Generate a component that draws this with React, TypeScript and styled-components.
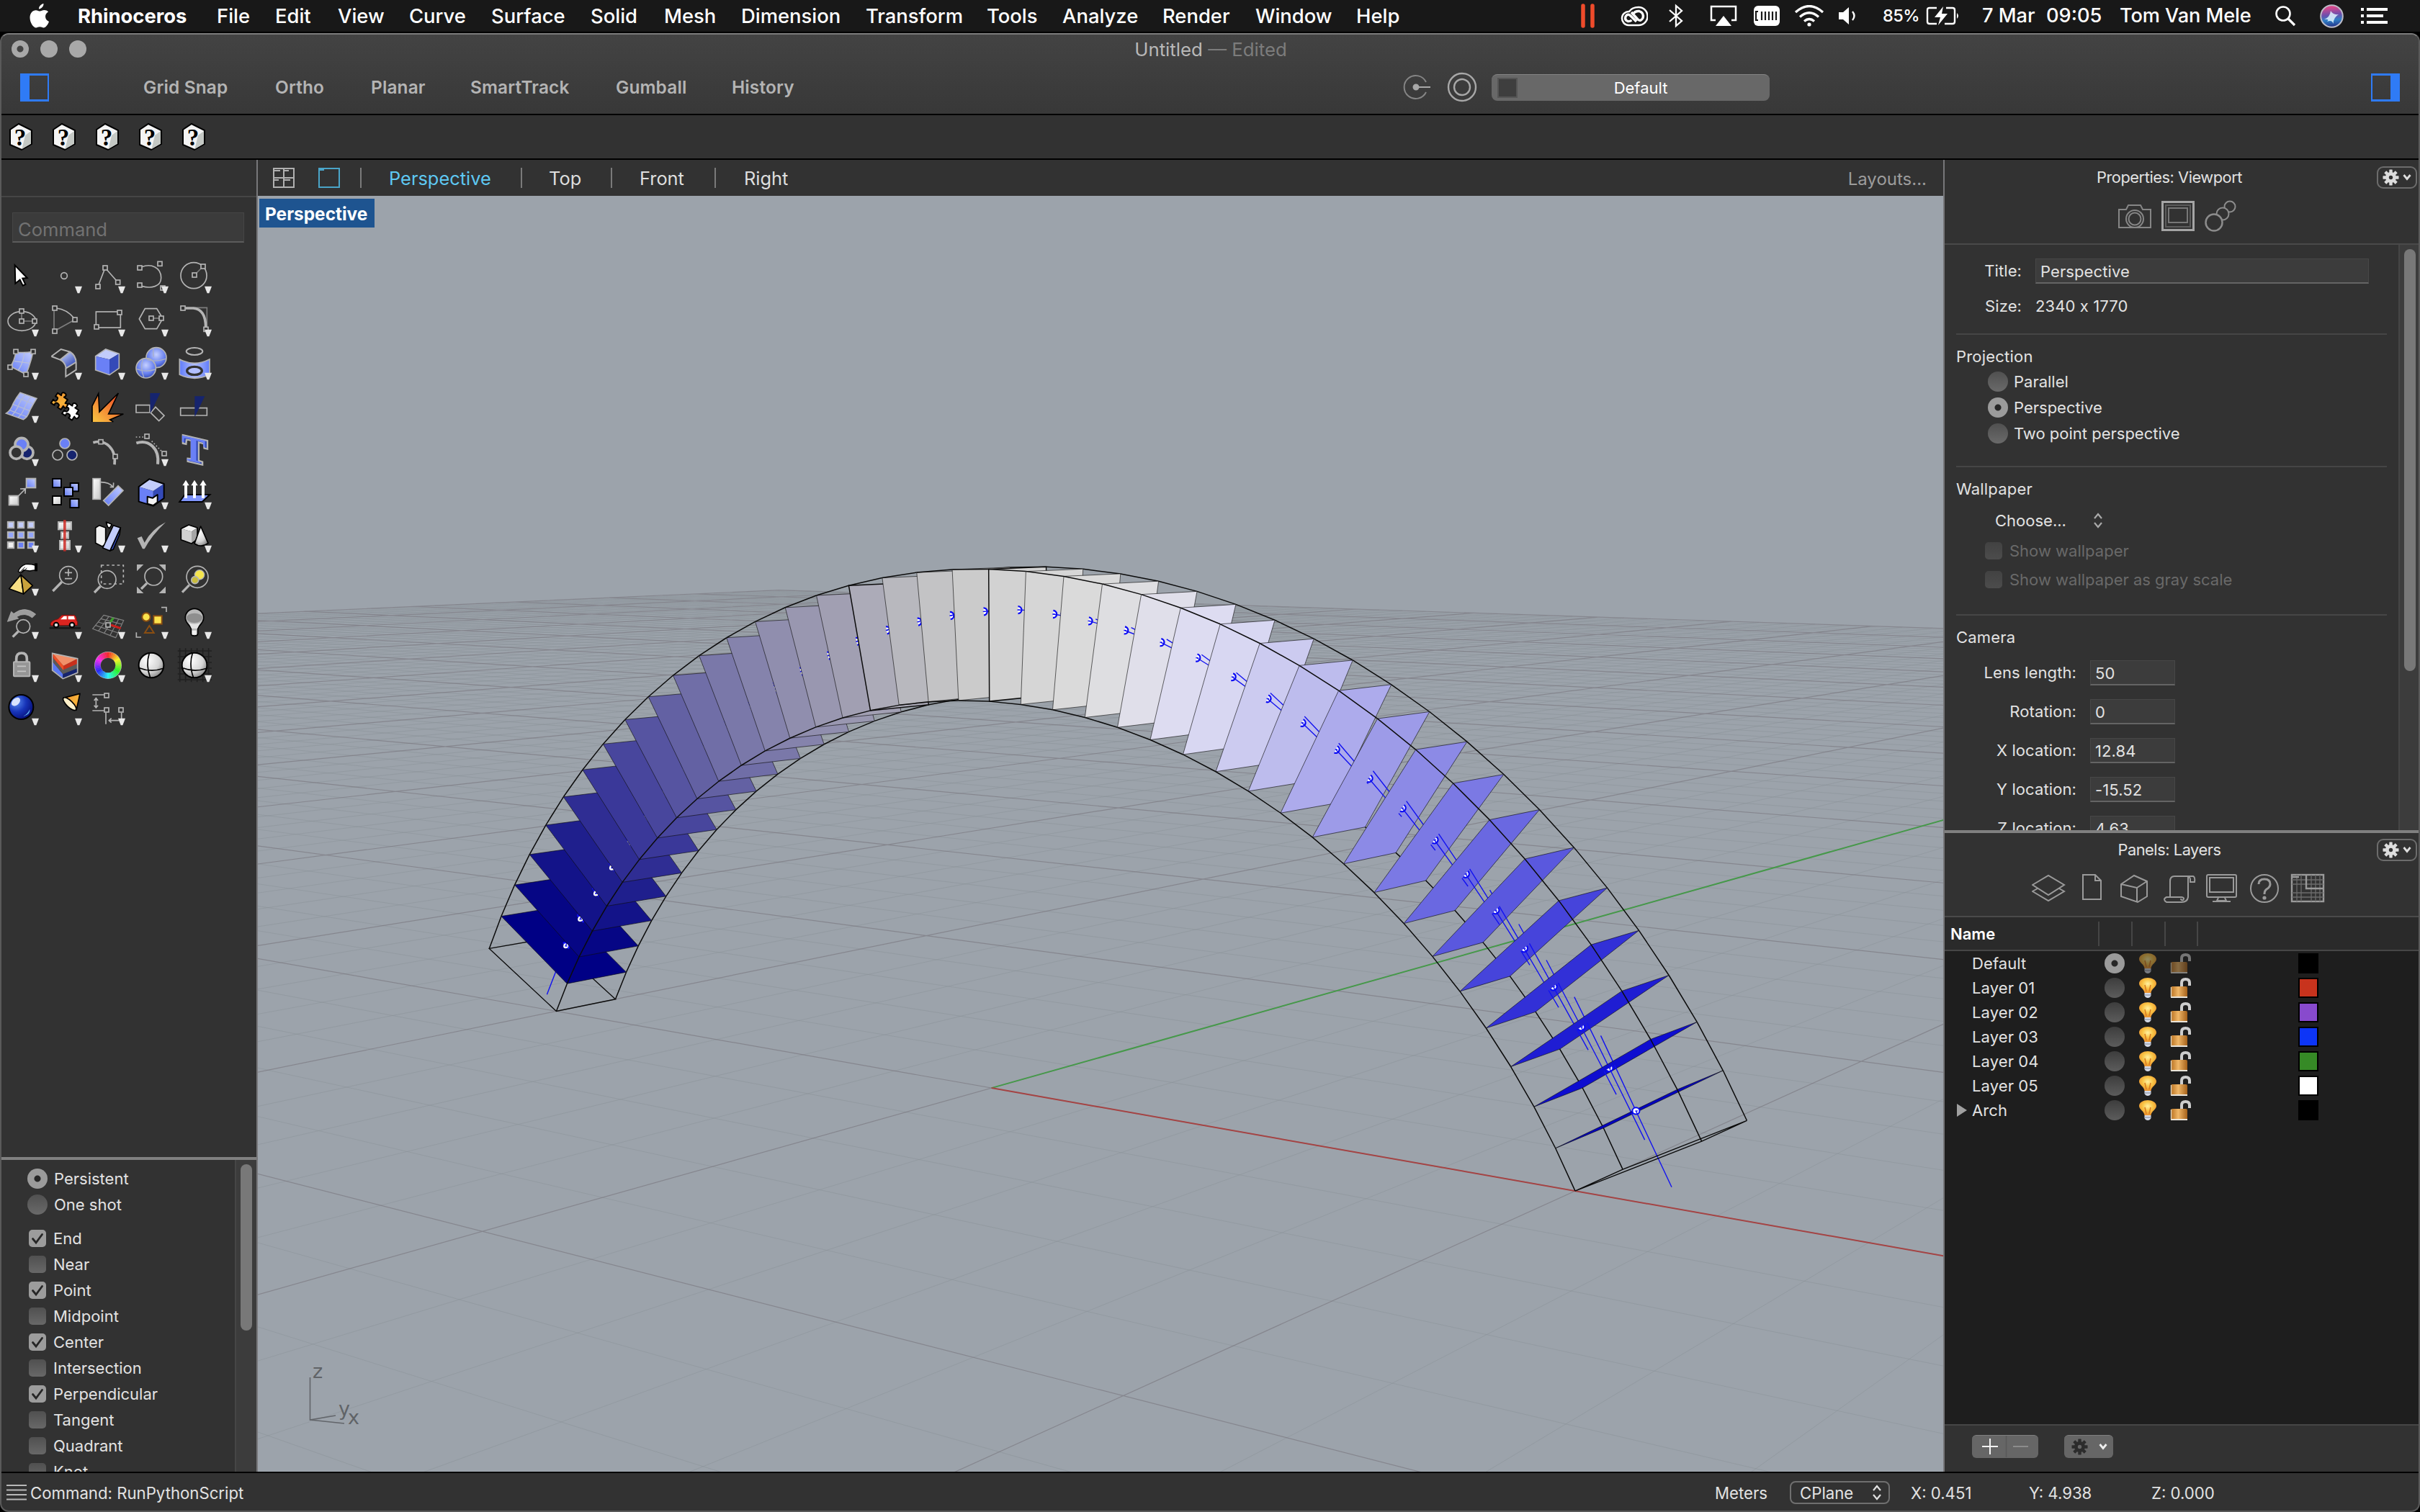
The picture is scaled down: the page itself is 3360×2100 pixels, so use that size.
import React from "react";
import styled, { createGlobalStyle } from "styled-components";

/* ---------- base ---------- */

const Global = createGlobalStyle`
  html, body { margin: 0; padding: 0; background: #000; }
  * { box-sizing: border-box; }
`;

const Desktop = styled.div`
  width: 3360px;
  height: 2100px;
  overflow: hidden;
  display: flex;
  flex-direction: column;
  background: #000;
  font-family: Inter, "Liberation Sans", sans-serif;
  font-size: 22px;
  color: #e2e2e2;
  white-space: nowrap;
`;

/* ---------- system menu bar ---------- */

const MenuBar = styled.header`
  height: 44px;
  flex: none;
  display: flex;
  justify-content: space-between;
  align-items: center;
  background: #181818;
  color: #fff;
  font-size: 27.4px;
  line-height: 44px;
`;

const MenuLeft = styled.nav`
  display: flex;
  align-items: center;
  padding-left: 40px;
`;

const AppleSlot = styled.div`
  width: 68px;
  display: flex;
`;

const MenuEntry = styled.span<{ $w: number; $bold?: boolean; $ls?: number }>`
  width: ${(p) => p.$w}px;
  font-weight: ${(p) => (p.$bold ? 700 : 500)};
  letter-spacing: ${(p) => p.$ls ?? 0}px;
`;

const MenuRight = styled.div`
  display: flex;
  align-items: center;
  width: 1165px;
`;

const StatusItem = styled.div<{ $w: number; $size?: number; $ls?: number }>`
  width: ${(p) => p.$w}px;
  flex: none;
  display: flex;
  align-items: center;
  font-size: ${(p) => p.$size ?? 27.2}px;
  letter-spacing: ${(p) => p.$ls ?? 0}px;
  font-weight: 500;
`;

/* ---------- window ---------- */

const Window = styled.section`
  margin-top: 2px;
  height: 2054px;
  display: flex;
  flex-direction: column;
  background: #323232;
  border-radius: 12px;
  border: 2px solid #5a5a5a;
  border-top-color: #7b7b7b;
  overflow: hidden;
`;

const TitleBar = styled.div`
  height: 112px;
  flex: none;
  background: linear-gradient(#434343, #383838);
  border-bottom: 2px solid #000;
  display: flex;
  flex-direction: column;
`;

const TitleRow = styled.div`
  height: 40px;
  display: grid;
  grid-template-columns: 300px 1fr 300px;
  align-items: center;
`;

const Lights = styled.div`
  display: flex;
  gap: 16px;
  padding-left: 14px;
`;

const Light = styled.i<{ $dot?: boolean }>`
  width: 24px;
  height: 24px;
  border-radius: 50%;
  background: ${(p) =>
    p.$dot ? "radial-gradient(circle, #444 0 4px, #a8a8a8 5px)" : "#a8a8a8"};
`;

const WindowTitle = styled.h1`
  margin: 0;
  padding-left: 2px;
  text-align: center;
  font-size: 25.8px;
  font-weight: 400;
  color: #b8b8b8;
  em {
    font-style: normal;
    color: #7c7c7c;
  }
`;

const ModeRow = styled.div`
  height: 66px;
  display: flex;
  align-items: center;
  padding: 0 26px;
`;

const SideToggle = styled.i<{ $right?: boolean }>`
  width: 40px;
  height: 39px;
  flex: none;
  border: 2px solid #2f7bf6;
  border-top-width: 3px;
  border-bottom-width: 3px;
  ${(p) => (p.$right ? "border-right-width: 13px;" : "border-left-width: 13px;")}
`;

const Mode = styled.span<{ $w: number }>`
  width: ${(p) => p.$w}px;
  font-size: 24.4px;
  font-weight: 600;
  letter-spacing: 0.15px;
  color: #b4b4b4;
`;

const Modes = styled.div`
  display: flex;
  margin-left: 131px;
  width: 1747px;
  flex: none;
`;

const RoundIcons = styled.div`
  display: flex;
  gap: 21px;
  width: 125px;
  flex: none;
  align-items: center;
  svg {
    flex: none;
  }
`;

const DisplayMode = styled.div`
  width: 386px;
  height: 37px;
  border-radius: 8px;
  background: #686868;
  border-top: 1px solid #858585;
  display: flex;
  align-items: center;
  padding-left: 8px;
  margin-right: auto;
  color: #fff;
  font-size: 22px;
  i {
    width: 28px;
    height: 28px;
    background: #3e3e3e;
    border: 2px solid #555;
  }
  span {
    flex: 1;
    text-align: center;
    padding-right: 8px;
  }
`;

const ScriptBar = styled.div`
  height: 62px;
  flex: none;
  border-bottom: 2px solid #000;
  display: flex;
  align-items: center;
  gap: 28px;
  padding-left: 11px;
  svg {
    display: block;
    overflow: visible;
  }
`;

const Work = styled.main`
  height: 1822px;
  flex: none;
  display: flex;
`;

/* ---------- left column ---------- */

const LeftColumn = styled.aside`
  width: 356px;
  flex: none;
  border-right: 2px solid #77777a;
  display: flex;
  flex-direction: column;
`;

const LeftHeader = styled.div`
  height: 52px;
  flex: none;
  border-bottom: 2px solid #464646;
`;

const CommandField = styled.div`
  margin: 21px 0 16px 15px;
  width: 322px;
  height: 42px;
  background: #3b3b3b;
  border: 1px solid #454545;
  border-bottom: 2px solid #5c5c5c;
  color: #727272;
  font-size: 25.6px;
  line-height: 45px;
  padding-left: 7px;
`;

const ToolGrid = styled.div`
  margin-left: -2px;
  display: grid;
  grid-template-columns: repeat(5, 60px);
  grid-auto-rows: 60px;
  height: 1254px;
  align-content: start;
  svg {
    display: block;
    overflow: visible;
  }
`;

const SnapPanel = styled.div`
  border-top: 4px solid #808080;
  height: 437px;
  display: flex;
  overflow: hidden;
`;

const SnapList = styled.div`
  flex: 1;
  padding: 8px 0 0 36px;
`;

const SnapGroup = styled.div`
  margin-top: 11px;
`;

const Track = styled.div<{ $w: number; $top: number }>`
  width: ${(p) => p.$w}px;
  flex: none;
  background: #3c3c3c;
  border-left: 2px solid #464646;
  padding: ${(p) => p.$top}px 0 0 6px;
`;

const Thumb = styled.i<{ $h: number }>`
  display: block;
  width: 16px;
  height: ${(p) => p.$h}px;
  border-radius: 8px;
  background: #787878;
`;

const Line = styled.label<{ $h?: number; $mt?: number; $dim?: boolean; $gap?: number; $pl?: number }>`
  display: flex;
  align-items: center;
  height: ${(p) => p.$h ?? 36}px;
  margin-top: ${(p) => p.$mt ?? 0}px;
  padding-left: ${(p) => p.$pl ?? 0}px;
  gap: ${(p) => p.$gap ?? 9}px;
  color: ${(p) => (p.$dim ? "#696969" : "#e2e2e2")};
`;

const RadioDot = styled.i<{ $on?: boolean; $dark?: boolean }>`
  width: 28px;
  height: 28px;
  flex: none;
  border-radius: 50%;
  background: ${(p) =>
    p.$on
      ? "radial-gradient(circle, #262626 0 4px, #9b9b9b 5px)"
      : p.$dark
      ? "linear-gradient(#3d3d3d, #5c5c5c)"
      : "linear-gradient(#505050, #6a6a6a)"};
`;

const CheckBox = styled.i<{ $on?: boolean; $dim?: boolean }>`
  width: 24px;
  height: 24px;
  flex: none;
  border-radius: 5px;
  background: ${(p) =>
    p.$on ? "#9c9c9c" : p.$dim ? "linear-gradient(#424242, #4c4c4c)" : "linear-gradient(#505050, #686868)"};
  svg {
    display: block;
  }
`;

/* ---------- viewport column ---------- */

const ViewColumn = styled.section`
  width: 2340px;
  flex: none;
  display: flex;
  flex-direction: column;
`;

const ViewTabs = styled.div`
  height: 50px;
  flex: none;
  display: flex;
  align-items: center;
  padding-left: 21px;
  font-size: 25.4px;
`;

const ViewTab = styled.span<{ $w: number; $active?: boolean }>`
  width: ${(p) => p.$w}px;
  color: ${(p) => (p.$active ? "#5ec8f2" : "#dedede")};
  line-height: 32px;
  height: 30px;
`;

const Sep = styled.i<{ $mr: number }>`
  width: 2px;
  height: 28px;
  margin-right: ${(p) => p.$mr}px;
  background: #7a7a7a;
`;

const Layouts = styled.span`
  margin-left: auto;
  margin-right: 23px;
  padding-top: 3px;
  color: #9c9c9c;
  font-size: 24px;
`;

const LayoutIcon = styled.svg`
  margin: 0 28px 0 33px;
`;

const ViewCanvas = styled.div`
  position: relative;
  width: 2340px;
  height: 1772px;
  background: #9ca3ab;
  svg {
    display: block;
  }
`;

const ViewName = styled.div`
  position: absolute;
  left: 2px;
  top: 4px;
  width: 160px;
  height: 40px;
  background: #1e5490;
  color: #fff;
  font-weight: 700;
  font-size: 24.4px;
  line-height: 42px;
  padding-left: 8px;
`;

/* ---------- right column ---------- */

const RightColumn = styled.aside`
  width: 660px;
  flex: none;
  border-left: 2px solid #77777a;
  display: flex;
  flex-direction: column;
`;

const PanelHead = styled.div<{ $h: number }>`
  height: ${(p) => p.$h}px;
  flex: none;
  border-bottom: 2px solid #4a4a4a;
`;

const PanelTitle = styled.div<{ $h: number }>`
  display: grid;
  grid-template-columns: 60px 1fr 60px;
  align-items: center;
  height: ${(p) => p.$h}px;
  text-align: center;
  font-size: 21.8px;
  letter-spacing: -0.45px;
  padding-right: 2px;
  padding-left: 22px;
  span {
    padding-right: 56px;
    padding-left: 2px;
  }
`;

const GearButton = styled.div`
  width: 56px;
  height: 31px;
  justify-self: end;
  border: 2px solid #6c6c6c;
  border-radius: 9px;
  display: flex;
  align-items: center;
  justify-content: center;
  gap: 4px;
`;

const IconStrip = styled.div<{ $pl: number; $h: number; $gap: number }>`
  display: flex;
  align-items: center;
  height: ${(p) => p.$h}px;
  padding-left: ${(p) => p.$pl}px;
  gap: ${(p) => p.$gap}px;
`;

const Properties = styled.div`
  height: 813px;
  flex: none;
  display: flex;
  overflow: hidden;
`;

const PropBody = styled.div`
  width: 630px;
  flex: none;
  padding-top: 18px;
`;

const PropRow = styled.div<{ $label: number; $mb?: number }>`
  display: grid;
  grid-template-columns: ${(p) => p.$label}px auto;
  column-gap: 19px;
  justify-content: start;
  align-items: center;
  height: 36px;
  margin-bottom: ${(p) => p.$mb ?? 18}px;
  letter-spacing: 0.1px;
  > label {
    text-align: right;
  }
`;

const Field = styled.div<{ $w: number }>`
  width: ${(p) => p.$w}px;
  height: 35px;
  background: #3c3c3c;
  border: 1px solid #474747;
  border-bottom: 2px solid #646464;
  padding-left: 6px;
  line-height: 35px;
`;

const Rule = styled.hr<{ $mt: number }>`
  border: 0;
  height: 2px;
  background: #464646;
  width: 598px;
  margin: ${(p) => p.$mt}px 0 0 16px;
`;

const SectionName = styled.h2<{ $mt: number; $mb: number }>`
  margin: ${(p) => p.$mt}px 0 ${(p) => p.$mb}px 16px;
  height: 28px;
  line-height: 28px;
  font-size: 22px;
  font-weight: 400;
  letter-spacing: 0.2px;
`;

const Choose = styled.div`
  display: flex;
  align-items: center;
  height: 30px;
  padding-left: 70px;
  gap: 36px;
`;

const LayersPanel = styled.div`
  border-top: 4px solid #808080;
  flex: 1;
  display: flex;
  flex-direction: column;
`;

const LayerGridHead = styled.div`
  height: 47px;
  flex: none;
  background: #2a2a2a;
  border-bottom: 2px solid #464646;
  display: grid;
  grid-template-columns: 205px 46px 46px 45px 46px;
  padding-left: 8px;
  align-items: center;
  color: #fff;
  font-weight: 600;
  i {
    height: 34px;
    width: 2px;
    background: #464646;
  }
`;

const LayerList = styled.div`
  height: 659px;
  flex: none;
  background: #1e1e1e;
  border-bottom: 2px solid #464646;
`;

const LayerRow = styled.div`
  display: grid;
  grid-template-columns: 21px 184px 47px 44px 178px 28px;
  align-items: center;
  height: 34px;
  padding-left: 17px;
  letter-spacing: 0.1px;
  svg {
    display: block;
  }
`;

const Swatch = styled.i<{ $c: string }>`
  width: 28px;
  height: 28px;
  border: 2px solid #000;
  background: ${(p) => p.$c};
`;

const LayerButtons = styled.div`
  display: flex;
  gap: 36px;
  padding: 13px 0 0 38px;
`;

const ButtonPill = styled.div<{ $w: number }>`
  width: ${(p) => p.$w}px;
  height: 32px;
  border-radius: 6px;
  background: #666;
  border-top: 1px solid #7f7f7f;
  svg {
    display: block;
  }
`;

/* ---------- status bar ---------- */

const StatusBar = styled.footer`
  flex: 1;
  border-top: 2px solid #000;
  display: flex;
  align-items: center;
  padding-left: 7px;
  padding-top: 2px;
  font-size: 22.2px;
`;

const StatusText = styled.span<{ $w: number; $ml?: number }>`
  width: ${(p) => p.$w}px;
  margin-left: ${(p) => p.$ml ?? 0}px;
`;

const CPlane = styled.div`
  width: 139px;
  height: 32px;
  border: 2px solid #6f6f6f;
  border-radius: 8px;
  display: flex;
  align-items: center;
  justify-content: space-between;
  padding: 0 8px 0 12px;
  margin-right: 29px;
`;

/* ---------- 3D scene ---------- */

type V3 = [number, number, number];
type P2 = [number, number];

const YAW = (37.2 * Math.PI) / 180;
const PITCH = (7.47 * Math.PI) / 180;
const FOCAL = 3687;
const EYE: V3 = [12.84, -15.52, 4.63];

function toCamera(p: V3): V3 {
  const dx = p[0] - EYE[0];
  const dy = p[1] - EYE[1];
  const dz = p[2] - EYE[2];
  const fwd = -dx * Math.sin(YAW) + dy * Math.cos(YAW);
  const right = dx * Math.cos(YAW) + dy * Math.sin(YAW);
  return [
    right,
    dz * Math.cos(PITCH) + fwd * Math.sin(PITCH),
    fwd * Math.cos(PITCH) - dz * Math.sin(PITCH),
  ];
}

const flat = (c: V3): P2 => [1170 + (FOCAL * c[0]) / c[2], 885 - (FOCAL * c[1]) / c[2]];
const project = (p: V3): P2 => flat(toCamera(p));

function segment(a: V3, b: V3): string {
  let ca = toCamera(a);
  let cb = toCamera(b);
  const near = 2;
  if (ca[2] < near && cb[2] < near) return "";
  if (ca[2] < near || cb[2] < near) {
    const t = (near - ca[2]) / (cb[2] - ca[2]);
    const m: V3 = [ca[0] + (cb[0] - ca[0]) * t, ca[1] + (cb[1] - ca[1]) * t, near];
    if (ca[2] < near) ca = m;
    else cb = m;
  }
  const p = flat(ca);
  const q = flat(cb);
  return `M${p[0].toFixed(1)} ${p[1].toFixed(1)}L${q[0].toFixed(1)} ${q[1].toFixed(1)}`;
}

function gridPaths() {
  let minor = "";
  let major = "";
  for (let k = -70; k <= 70; k++) {
    const d = segment([k, -70, 0], [k, 70, 0]) + segment([-70, k, 0], [70, k, 0]);
    if (k % 5 === 0) major += d;
    else minor += d;
  }
  return { minor, major };
}

const RADIUS = 17 / 3;
const DROP = RADIUS - 3;
const HALF = Math.asin(5 / RADIUS);
const COUNT = 40;
const DEPTH = 0.7;

const angleAt = (i: number) => -HALF + (2 * HALF * i) / COUNT;
const ringPoint = (i: number, r: number, y: number): V3 => [
  r * Math.sin(angleAt(i)),
  y,
  r * Math.cos(angleAt(i)) - DROP,
];
const corners = (i: number): P2[] =>
  [
    ringPoint(i, RADIUS, 0),
    ringPoint(i, RADIUS + 1, 0),
    ringPoint(i, RADIUS + 1, DEPTH),
    ringPoint(i, RADIUS, DEPTH),
  ].map(project);

const THRUST: P2[] = [
  [0, 6.347],
  [4, 6.293],
  [5, 6.273],
  [10, 6.131],
  [15, 6.068],
  [17, 6.087],
  [19, 6.14],
];
function thrustRadius(i: number) {
  const a = Math.abs(i - 20);
  for (let k = 1; k < THRUST.length; k++) {
    if (a <= THRUST[k][0]) {
      const [x0, y0] = THRUST[k - 1];
      const [x1, y1] = THRUST[k];
      return y0 + ((y1 - y0) * (a - x0)) / (x1 - x0);
    }
  }
  return 6.15;
}

/* signed distance of a point from the joint plane i */
const side = (p: V3, i: number) => p[0] * Math.cos(angleAt(i)) - (p[2] + DROP) * Math.sin(angleAt(i));

function forceEnds(i: number): [V3, V3] {
  const c = ringPoint(i, thrustRadius(i), DEPTH / 2);
  const dz = -0.025 * (i - 20);
  return [
    [c[0] - 0.27, c[1], c[2] - dz],
    [c[0] + 0.27, c[1], c[2] + dz],
  ];
}

/* the part of force line k that lies between the joints j and j + 1 */
function forceInSlab(k: number, j: number): string {
  if (k < 1 || k >= COUNT) return "";
  const [a, b] = forceEnds(k);
  let t0 = 0;
  let t1 = 1;
  if (j > 0) {
    const s0 = side(a, j);
    const s1 = side(b, j);
    if (s1 <= 0) return "";
    if (s0 < 0) t0 = -s0 / (s1 - s0);
  }
  if (j < COUNT - 1) {
    const s0 = side(a, j + 1);
    const s1 = side(b, j + 1);
    if (s0 >= 0) return "";
    if (s1 > 0) t1 = -s0 / (s1 - s0);
  }
  if (t1 <= t0) return "";
  const at = (t: number): V3 => [a[0] + (b[0] - a[0]) * t, a[1], a[2] + (b[2] - a[2]) * t];
  return segment(at(t0), at(t1));
}

const BLADE_RGB: number[][] = [
  [0, 0, 133], [6, 6, 133], [19, 19, 137], [31, 31, 141], [47, 45, 147], [58, 56, 153],
  [72, 70, 157], [86, 84, 161], [99, 97, 163], [112, 110, 167], [122, 120, 169], [133, 131, 172],
  [144, 142, 174], [153, 151, 176], [161, 159, 178], [172, 171, 184], [184, 184, 190],
  [195, 195, 197], [203, 203, 203], [210, 210, 210], [214, 214, 214], [218, 218, 218],
  [222, 222, 225], [224, 223, 234], [221, 220, 241], [216, 215, 242], [204, 203, 240],
  [189, 188, 237], [173, 171, 236], [157, 155, 232], [140, 138, 230], [123, 121, 228],
  [106, 104, 225], [90, 88, 222], [70, 68, 219], [50, 48, 215], [31, 29, 211], [14, 13, 208],
  [4, 4, 190],
];

const pts = (q: P2[]) => q.map((p) => `${p[0].toFixed(1)},${p[1].toFixed(1)}`).join(" ");

function Joint({ i }: { i: number }) {
  const cur = corners(i);
  const c = project(ringPoint(i, thrustRadius(i), DEPTH / 2));
  const strong = i === 20 || i === 16;
  const up = Math.atan2(cur[1][1] - cur[0][1], cur[1][0] - cur[0][0]);
  const ux = Math.cos(up) * 5;
  const uy = Math.sin(up) * 5;
  return (
    <>
      <polygon
        points={pts(cur)}
        fill={`rgb(${BLADE_RGB[i - 1].join(",")})`}
        stroke="#0d0d0d"
        strokeOpacity={strong ? 1 : 0.7}
        strokeWidth={strong ? 1.5 : 0.9}
      />
      {i === 39 ? (
        <ellipse cx={c[0]} cy={c[1]} rx={5} ry={4.6} fill="#fff" stroke="#0a0af5" strokeWidth={2} />
      ) : (
        <>
          {i < 5 && <circle cx={c[0]} cy={c[1]} r={3.2} fill="#fff" />}
          <path
            d={`M${c[0] + ux} ${c[1] + uy}A5 5 0 0 1 ${c[0] - ux} ${c[1] - uy}`}
            fill="#fff"
            stroke="#0a0af5"
            strokeWidth={2.3}
          />
        </>
      )}
      {(i < 5 || i > 12) && <path d={`M${c[0] - 1} ${c[1]}h3.500`} stroke="#0a0af5" strokeWidth={1.2} />}
    </>
  );
}

function Arch() {
  const out: React.ReactNode[] = [];
  out.push(<polygon key="base" points={pts(corners(0))} stroke="#0b0b0b" strokeWidth={1.4} />);
  for (let i = 1; i <= COUNT; i++) {
    const prev = corners(i - 1);
    const cur = corners(i);
    const edges = cur.map((c, k) => `M${prev[k][0]} ${prev[k][1]}L${c[0]} ${c[1]}`).join("");
    const forces = [i - 3, i - 2, i - 1, i, i + 1].map((k) => forceInSlab(k, i - 1)).join("");
    out.push(<path key={`e${i}`} d={edges} stroke="#0b0b0b" strokeWidth={1.5} />);
    if (forces) out.push(<path key={`f${i}`} d={forces} stroke="#1212f0" strokeWidth={1.4} />);
    if (i < COUNT) out.push(<Joint key={`j${i}`} i={i} />);
    else out.push(<polygon key="end" points={pts(cur)} stroke="#0b0b0b" strokeWidth={1.4} />);
  }
  return <g fill="none">{out}</g>;
}

function Scene() {
  const { minor, major } = gridPaths();
  return (
    <svg width="2340" height="1772" viewBox="0 0 2340 1772">
      <path d={minor} stroke="#8a9198" strokeWidth="1" strokeOpacity="0.5" fill="none" />
      <path d={major} stroke="#77747d" strokeWidth="1.2" strokeOpacity="0.62" fill="none" />
      <path d={segment([0, 0, 0], [0, 70, 0])} stroke="#46994a" strokeWidth="2" />
      <path d={segment([0, 0, 0], [16, 0, 0])} stroke="#a54444" strokeWidth="2" />
      <Arch />
      <g stroke="#62656a" strokeWidth="1.6" fill="none">
        <path d="M72.500 1641V1700L108 1694M72.500 1700L120 1705" />
      </g>
      <g fill="#606367" fontFamily="'DejaVu Sans', sans-serif" fontSize="27">
        <text x="76" y="1642">z</text>
        <text x="112" y="1694">y</text>
        <text x="125" y="1706">x</text>
      </g>
    </svg>
  );
}

/* ---------- tool icons (180 x 180 units per cell) ---------- */

const G = "#b4b4b4";
const D = "#7d7d7d";

const Sq = ({ x, y }: { x: number; y: number }) => (
  <rect x={x - 9} y={y - 9} width="18" height="18" fill="#323232" stroke={G} strokeWidth="5" />
);
const Box = ({ x, y, s, f = "url(#bl)", k = G }: { x: number; y: number; s: number; f?: string; k?: string }) => (
  <rect x={x - s / 2} y={y - s / 2} width={s} height={s} fill={f} stroke={k} strokeWidth="6" />
);
const More = () => <path d="M132 134h30l-11 29h-8z" fill="#e8e8e8" />;

const Lens = ({ x, y, r, hx, hy }: { x: number; y: number; r: number; hx: number; hy: number }) => (
  <g stroke={G} fill="none">
    <path d={`M${x - r * 0.75} ${y + r * 0.75}L${hx} ${hy}`} strokeWidth="10" />
    <circle cx={x} cy={y} r={r} strokeWidth="5" />
  </g>
);

const Ball = () => (
  <g>
    <circle cx="90" cy="93" r="52" fill="url(#wh)" stroke="#000" strokeWidth="6" />
    <path d="M82 42Q66 92 86 145M40 104Q90 124 141 106" fill="none" stroke="#000" strokeWidth="5" />
  </g>
);

const Jigsaw = ({ x, y, f }: { x: number; y: number; f: string }) => (
  <path
    transform={`translate(${x} ${y}) rotate(34)`}
    d="M-25 -25H-7Q-15 -40 0 -41Q15 -40 7 -25H25V-7Q40 -15 41 0Q40 15 25 7V25H8Q13 11 0 11Q-13 11 -8 25H-25V8Q-11 13 -11 0Q-11 -13 -25 -8Z"
    fill={f}
    stroke="#000"
    strokeWidth="6"
    strokeLinejoin="round"
  />
);

const wheel = Array.from({ length: 36 }, (_, i) => {
  const a = ((i * 10 - 5) * Math.PI) / 180;
  const b = ((i * 10 + 6) * Math.PI) / 180;
  const p = (t: number) => `${(90 + 43 * Math.sin(t)).toFixed(1)} ${(93 - 43 * Math.cos(t)).toFixed(1)}`;
  return <path key={i} d={`M${p(a)}A43 43 0 0 1 ${p(b)}`} stroke={`hsl(${i * 10} 90% 56%)`} strokeWidth="24" fill="none" />;
});

const lineSet = (d: string, c = G, w = 5) => <path d={d} fill="none" stroke={c} strokeWidth={w} />;

const TOOLS: [React.ReactNode, boolean][] = [
  [<path d="M62 46L113 99L94 101L106 126L95 131L83 107L64 122Z" fill="#fff" stroke="#000" strokeWidth="6" />, false],
  [<circle cx="87" cy="90" r="13" fill="none" stroke={G} strokeWidth="5" />, true],
  [<>{lineSet("M78 57L48 135M78 57L131 117")}<Sq x={78} y={57} /><Sq x={48} y={135} /><Sq x={131} y={117} /></>, true],
  [<>{lineSet("M50 53C90 38 131 55 131 98C131 135 90 145 50 133")}<Sq x={42} y={57} /><Sq x={42} y={129} /><Sq x={126} y={40} /><Sq x={138} y={141} /></>, true],
  [<><circle cx="87" cy="89" r="54" fill="none" stroke={G} strokeWidth="5" />{lineSet("M90 87L126 51", D)}<Sq x={126} y={51} /><Sq x={90} y={87} /></>, true],

  [<><ellipse cx="91" cy="99" rx="58" ry="40" fill="none" stroke={G} strokeWidth="5" />{lineSet("M90 57V99H144", D)}<Sq x={90} y={57} /><Sq x={90} y={99} /><Sq x={144} y={99} /></>, true],
  [<>{lineSet("M45 50V141L132 93", D)}{lineSet("M55 45Q98 50 128 86")}<Sq x={48} y={45} /><Sq x={132} y={93} /><Sq x={48} y={141} /></>, true],
  [<><rect x="40" y="60" width="102" height="66" fill="none" stroke={G} strokeWidth="5" /><Sq x={138} y={63} /><Sq x={42} y={123} /></>, true],
  [<>{lineSet("M40 90L64 47H113L138 88L113 131H64Z")}{lineSet("M90 87H132", D)}<Sq x={90} y={87} /><Sq x={132} y={87} /></>, true],
  [<>{lineSet("M85 43H142V130", D)}{lineSet("M52 45H85Q137 50 137 125", G, 11)}<Sq x={42} y={45} /><Sq x={138} y={133} /></>, true],

  [<><path d="M66 48Q100 52 138 46Q128 95 108 141Q72 122 44 108Q60 85 66 48Z" fill="url(#bl)" stroke={G} strokeWidth="5" />{lineSet("M102 49Q96 95 76 124M60 86Q90 90 122 94", "#b9c0da", 4)}<Sq x={66} y={46} /><Sq x={138} y={46} /><Sq x={42} y={111} /><Sq x={108} y={141} /></>, true],
  [<><path d="M72 80L112 47Q136 62 137 90L97 116Q94 92 72 80Z" fill="url(#bd)" />{lineSet("M34 66L74 36L112 47Q136 62 137 92V122L94 150V116L137 90M34 66L70 80Q94 92 95 118M70 80L110 48", G, 6)}</>, true],
  [<><path d="M38 65L80 36L136 55L96 79Z" fill="#c2ccfb" /><path d="M38 65L96 79V143L38 123Z" fill="#6a80f6" /><path d="M96 79L136 55V115L96 143Z" fill="#344ab8" />{lineSet("M38 65L80 36L136 55V115L96 143L38 123Z", G, 5)}</>, true],
  [<><circle cx="111" cy="71" r="42" fill="url(#sp)" stroke={G} strokeWidth="5" /><circle cx="68" cy="115" r="41" fill="url(#sp)" stroke={G} strokeWidth="5" />{lineSet("M56 76Q42 115 60 155M28 118Q68 134 107 120M100 32Q96 50 100 68M72 80Q110 90 151 76", "#a9b0c8", 4)}</>, true],
  [<><ellipse cx="90" cy="45" rx="34" ry="15" fill="none" stroke={G} strokeWidth="6" /><path d="M28 78Q90 110 153 78V142Q90 172 28 142Z" fill="url(#band)" stroke={G} strokeWidth="5" /><ellipse cx="90" cy="126" rx="31" ry="17" fill="#b3c0ff" stroke="#323232" strokeWidth="10" /></>, true],

  [<><path d="M84 37L153 61Q138 85 125 110Q115 140 97 149L26 123Q45 112 55 82Q66 60 84 37Z" fill="url(#bl)" stroke={G} strokeWidth="5" />{lineSet("M107 45Q84 68 74 98Q62 120 50 132M130 53Q112 75 100 106Q88 132 74 141M70 58L140 84M54 86L124 112M40 110L112 138", "#b4bbd6", 4)}</>, true],
  [<><Jigsaw x={67} y={73} f="url(#or)" /><Jigsaw x={113} y={117} f="#fff" /></>, false],
  [<path d="M24 159V93L50 41L54 117L133 39L92 126L154 126L98 150L112 159" fill="url(#fire)" stroke="#000" strokeWidth="5" />, false],
  [<><path d="M27 89H84V120H27Z" fill="none" stroke={G} strokeWidth="5" /><path d="M108 97L144 133L122 155L88 121Z" fill="none" stroke={G} strokeWidth="5" /><path d="M85 39H127L86 123Z" fill="#16246e" /></>, false],
  [<><path d="M32 101H142V132H32Z" fill="none" stroke={G} strokeWidth="5" /><path d="M91 52H133L93 135H91Z" fill="#16246e" /></>, false],

  [<g stroke={G} strokeWidth="11"><circle cx="112" cy="107" r="26" fill="#16246e" /><circle cx="90" cy="73" r="27" fill="#6a80f6" /><circle cx="68" cy="107" r="26" fill="#323232" /></g>, true],
  [<g stroke={G} strokeWidth="5"><circle cx="90" cy="69" r="21" fill="#6a80f6" /><circle cx="60" cy="117" r="21" fill="none" /><circle cx="120" cy="117" r="21" fill="#16246e" /></g>, false],
  [<>{lineSet("M28 65C80 50 125 90 117 157", G, 11)}<Sq x={60} y={62} /><Sq x={120} y={123} /></>, false],
  [<>{lineSet("M28 67C80 50 125 90 117 155", G, 12)}<path d="M26 42H62M92 59L134 102" fill="none" stroke={G} strokeWidth="5" strokeDasharray="5 8" /><Sq x={72} y={39} /><Sq x={144} y={111} /></>, true],
  [<g transform="translate(84 143) skewY(13)" fontFamily="'Liberation Serif', serif" fontWeight="700" fontSize="150" textAnchor="middle"><text x="9" y="2" fill="#3148b5" stroke={G} strokeWidth="14">T</text><text x="9" y="2" fill="#3148b5">T</text><text x="2" y="1" fill="#6a80f6">T</text></g>, false],

  [<><Box x={57} y={126} s={38} f="url(#wl)" /><Box x={129} y={54} s={38} />{lineSet("M76 108L104 80M84 78L106 77L105 98")}</>, true],
  [<><Box x={57} y={54} s={36} k="#000" /><Box x={130} y={71} s={34} k="#000" /><Box x={105} y={90} s={36} k="#000" /><Box x={57} y={126} s={36} f="url(#wl)" k="#000" /><Box x={130} y={138} s={36} k="#000" /></>, false],
  [<><rect x="27" y="35" width="31" height="86" fill="url(#wl)" stroke={G} strokeWidth="5" />{lineSet("M60 50Q95 50 110 70M98 70L112 71L113 52")}<path d="M132 65L153 85L92 147L71 127Z" fill="url(#bl)" stroke={G} strokeWidth="5" /></>, false],
  [<g stroke="#000" strokeWidth="6" strokeLinejoin="round"><path d="M38 69L82 37L143 57L98 87Z" fill="#c2ccfb" stroke="none" /><path d="M98 87L143 57V117L98 149Z" fill="#344ab8" stroke="none" /><path d="M38 69L98 87V149L38 131Z" fill="#6a80f6" stroke="none" /><path d="M38 69L82 37L143 57V117L98 149L38 131Z" fill="none" /><path d="M74 110L96 116L116 102V134L98 147L74 140Z" fill="#f3f3f3" /></g>, true],
  [<><path d="M50 102H154L122 132H28Z" fill="#7f95ff" stroke="#000" strokeWidth="6" /><path d="M48 116V64H40L54 41L68 64H60V116ZM84 116V64H76L90 41L104 64H96V116ZM120 116V64H112L126 41L140 64H132V116Z" fill="#fff" /></>, true],

  [<>{[0, 1, 2].map((r) => [0, 1, 2].map((c) => <Box key={`${r}${c}`} x={45 + 42 * c} y={48 + 42 * r} s={25} f={r === 2 ? (c === 0 ? "#f0f0f0" : "#6a80f6") : r === 1 ? "#93a5fa" : "#c2ccfb"} />))}</>, true],
  [<><g fill="url(#wl)" stroke={G} strokeWidth="6"><rect x="63" y="36" width="54" height="31" /><rect x="75" y="78" width="30" height="26" /><rect x="69" y="114" width="42" height="36" /></g><rect x="84" y="27" width="11" height="131" fill="#cc2b26" fillOpacity="0.85" /></>, true],
  [<g stroke="#000" strokeWidth="5" strokeLinejoin="round"><path d="M82 36L106 46L96 62L88 56Z" fill="#fff" /><path d="M38 60L54 50L80 60V128L66 138L38 124Z" fill="#f2f2f2" /><path d="M142 60L138 88L112 150L98 156Z" fill="#344ab8" /><path d="M112 50L142 60L98 156L68 144Z" fill="#c2ccfb" /></g>, true],
  [<path d="M32 103L50 96L62 122Q92 66 150 37Q92 92 62 148H54Z" fill={G} />, true],
  [<g stroke="#000" strokeWidth="5" strokeLinejoin="round"><path d="M34 64L66 48L102 60L78 76Z" fill="#f4f4f4" stroke="none" /><path d="M34 64L78 76V126L34 110Z" fill="#d0d0d0" stroke="none" /><path d="M78 76L102 60V108L78 126Z" fill="#a5a5a5" stroke="none" /><path d="M34 64L66 48L102 60V108L78 126L34 110Z" fill="none" /><path d="M116 54L147 124Q118 146 90 126Z" fill="url(#wh)" /></g>, true],

  [<><path d="M87 76L38 134L98 156Z" fill="#f8df84" stroke="#000" strokeWidth="5" strokeLinejoin="round" /><path d="M87 76L136 121L98 156Z" fill="#c9a33c" stroke="#000" strokeWidth="5" strokeLinejoin="round" /><path d="M76 62Q84 40 106 32Q128 30 146 36V56L124 60L98 56L86 68Z" fill="#fff" stroke="#000" strokeWidth="4" /><path d="M104 44L82 66M112 48L92 68" stroke="#000" strokeWidth="3" /><rect x="144" y="28" width="12" height="33" fill="#000" /></>, true],
  [<><Lens x={105} y={78} r={37} hx={40} hy={144} />{lineSet("M105 52V82M90 67H120M90 92H120")}</>, false],
  [<><Lens x={86} y={96} r={37} hx={33} hy={150} /><rect x="62" y="36" width="92" height="78" fill="none" stroke={G} strokeWidth="5" strokeDasharray="11 11" /></>, false],
  [<><Lens x={100} y={83} r={37} hx={48} hy={135} /><path d="M30 33h28L30 61ZM150 33h-28l28 28ZM30 153h28L30 125ZM150 153h-28l28-28Z" fill={G} /></>, false],
  [<><Lens x={102} y={85} r={45} hx={39} hy={149} /><circle cx="111" cy="76" r="20" fill="#f5e54d" stroke={G} strokeWidth="4" /><circle cx="92" cy="98" r="15" fill="#c9bc3e" stroke={G} strokeWidth="5" /></>, false],

  [<><path d="M31 91L47 49L57 58Q104 22 149 60L134 75Q104 50 69 71L77 78Z" fill="#9d9d9d" stroke={G} strokeWidth="2" /><Lens x={97} y={111} r={28} hx={53} hy={155} /></>, true],
  [<><path d="M26 118H156" stroke="#161616" strokeWidth="7" /><path d="M30 100Q34 86 62 80L78 64H128Q138 66 139 86L143 92V106L32 108Z" fill="#dc2520" stroke="#7c100d" strokeWidth="3" /><path d="M72 82L86 68H98V82ZM104 68H128L132 82H104Z" fill="#fff" /><circle cx="54" cy="105" r="10" fill="#ddd" stroke="#000" strokeWidth="6" /><circle cx="120" cy="105" r="10" fill="#ddd" stroke="#000" strokeWidth="6" /></>, true],
  [<>{lineSet("M72 64L155 86L122 158L26 121ZM93 70L50 130M114 75L74 139M134 81L98 149M60 79L148 102M49 93L141 120M38 107L132 138", "#828282", 3.5)}{lineSet("M100 92L112 76", "#3d9b2c", 10)}{lineSet("M102 105L143 119", "#c81f1a", 9)}<Sq x={90} y={105} /></>, true],
  [<><circle cx="69" cy="72" r="17" fill="#fbe34d" stroke="#8a4e12" strokeWidth="6" /><rect x="100" y="67" width="34" height="34" fill="#fbe34d" stroke="#8a4e12" strokeWidth="6" /><path d="M82 108L63 138H101Z" fill="none" stroke="#8a4e12" strokeWidth="6" />{lineSet("M132 32H153V51M28 136V156H48")}</>, true],
  [<><path d="M90 37A38 38 0 0 1 128 76C128 100 104 108 104 122V140Q104 150 90 150Q76 150 76 140V122C76 108 52 100 52 76A38 38 0 0 1 90 37Z" fill="#b9b9b9" stroke="#000" strokeWidth="5" /><ellipse cx="90" cy="76" rx="33" ry="20" fill="#8f8f8f" /><path d="M66 96Q90 106 114 96L102 120H78Z" fill="#e3e3e3" /><rect x="80" y="128" width="18" height="18" fill="#f1f1f1" /></>, true],

  [<><path d="M68 78V66Q68 42 90 42Q112 42 112 66V78" fill="none" stroke={G} strokeWidth="11" /><rect x="57" y="79" width="67" height="60" rx="3" fill="#969696" stroke={G} strokeWidth="6" />{lineSet("M72 97H108M72 118H108", "#c4c4c4", 5)}</>, true],
  [<><path d="M38 43L84 95L143 65V90L84 116L38 62Z" fill="#c9301c" /><path d="M38 60L84 112L143 86V106L84 130L38 80Z" fill="#5a5a5a" /><path d="M38 78L82 130V146L38 112Z" fill="#5b78f5" /><path d="M82 130L143 106V122L82 148Z" fill="#16246e" /><path d="M38 43L143 65L84 95Z" fill="#f29069" /><path d="M38 43L84 95V114L46 66Z" fill="#ee5128" />{lineSet("M38 43L143 65V124L82 149L38 114Z", G, 5)}</>, true],
  [<><circle cx="90" cy="93" r="57" fill={G} />{wheel}<circle cx="90" cy="93" r="31" fill="#323232" /></>, true],
  [<Ball />, false],
  [<>{lineSet("M29 22V163M53 22V163M77 22V163M101 22V163M125 22V163M149 22V163M20 33H162M20 57H162M20 81H162M20 105H162M20 129H162M20 153H162", "#202020", 5)}<Ball /></>, true],

  [<><circle cx="88" cy="87" r="51" fill="url(#deep)" stroke="#000" strokeWidth="6" /><ellipse cx="66" cy="65" rx="21" ry="14" transform="rotate(-42 66 65)" fill="#e4ecff" fillOpacity="0.92" /><path d="M96 126Q116 116 124 96Q128 118 96 126Z" fill="#5eb2ec" /></>, true],
  [<g stroke="#000" strokeWidth="5" strokeLinejoin="round"><path d="M84 49L153 31L138 100Q108 90 84 49Z" fill="url(#or)" /><ellipse cx="110" cy="74" rx="36" ry="13" transform="rotate(44 110 74)" fill="#fff0c9" /></g>, true],
  [<>{lineSet("M25 36H74M25 102H74M81 110V158M146 110V158M40 52V86M32 60L40 50L48 60M32 80L40 90L48 80M96 143H136M104 134L94 143L104 152")}<Sq x={84} y={39} /><Sq x={84} y={99} /><Sq x={144} y={99} /></>, true],
];

function Tools() {
  return (
    <ToolGrid>
      {TOOLS.map(([art, more], i) => (
        <svg key={i} width="60" height="60" viewBox="0 0 180 180">
          {art}
          {more && <More />}
        </svg>
      ))}
    </ToolGrid>
  );
}

const Paints = () => (
  <svg width="0" height="0" viewBox="0 0 1 1" display="block">
    <defs>
      <linearGradient id="bl" x1="1" y1="0" x2="0" y2="1"><stop offset="0" stopColor="#c6d0ff" /><stop offset="1" stopColor="#6079f4" /></linearGradient>
      <linearGradient id="bd" x1="0" y1="0" x2="0.7" y2="1"><stop offset="0" stopColor="#d3dcff" /><stop offset="1" stopColor="#2f48b6" /></linearGradient>
      <linearGradient id="band"><stop offset="0" stopColor="#5f7bfa" /><stop offset="0.5" stopColor="#b3c0ff" /><stop offset="1" stopColor="#5f7bfa" /></linearGradient>
      <linearGradient id="wl" x1="0" y1="0" x2="1" y2="1"><stop offset="0" stopColor="#ffffff" /><stop offset="1" stopColor="#c8c8c8" /></linearGradient>
      <linearGradient id="or" x1="0" y1="0" x2="1" y2="1"><stop offset="0" stopColor="#ee8b2a" /><stop offset="0.6" stopColor="#f7b43c" /><stop offset="1" stopColor="#ef7e22" /></linearGradient>
      <linearGradient id="fire" x1="0" y1="1" x2="1" y2="0"><stop offset="0.1" stopColor="#f8bb40" /><stop offset="1" stopColor="#ec3a22" /></linearGradient>
      <radialGradient id="sp" cx="0.5" cy="0.35" r="0.7"><stop offset="0" stopColor="#c5d0ff" /><stop offset="0.6" stopColor="#6a82f0" /><stop offset="1" stopColor="#2c44ad" /></radialGradient>
      <radialGradient id="wh" cx="0.35" cy="0.3" r="0.8"><stop offset="0" stopColor="#ffffff" /><stop offset="0.6" stopColor="#d5d5d5" /><stop offset="1" stopColor="#7b7b7b" /></radialGradient>
      <radialGradient id="deep" cx="0.3" cy="0.3" r="0.8"><stop offset="0" stopColor="#5a8cf0" /><stop offset="0.5" stopColor="#1734b8" /><stop offset="1" stopColor="#040a70" /></radialGradient>
      <radialGradient id="glow" cx="0.5" cy="0.4" r="0.6"><stop offset="0" stopColor="#fff0a0" /><stop offset="0.5" stopColor="#f9c445" /><stop offset="1" stopColor="#ea8f2c" /></radialGradient>
      <linearGradient id="brass"><stop offset="0" stopColor="#b8701f" /><stop offset="0.45" stopColor="#f0b768" /><stop offset="1" stopColor="#a5611a" /></linearGradient>
      <linearGradient id="siri" x1="0.4" y1="0" x2="0.5" y2="1"><stop offset="0.1" stopColor="#d8488c" /><stop offset="0.45" stopColor="#6a4fae" /><stop offset="0.68" stopColor="#2f7fc4" /><stop offset="1" stopColor="#232f86" /></linearGradient>
    </defs>
  </svg>
);

/* ---------- small drawings ---------- */

const Cog = ({ s, c, hole }: { s: number; c: string; hole: string }) => (
  <svg width={s} height={s} viewBox="-12 -12 24 24">
    <g fill={c}>
      <circle r="7.800" />
      {[0, 45, 90, 135].map((a) => (
        <rect key={a} x="-2.300" y="-11.500" width="4.600" height="23" rx="0.500" transform={`rotate(${a})`} />
      ))}
    </g>
    <circle r="2.800" fill={hole} />
  </svg>
);

const Chevron = ({ c = "#ddd" }: { c?: string }) => (
  <svg width="14" height="10" viewBox="0 0 14 10">
    <path d="M2.500 2L7 7.500L11.500 2" fill="none" stroke={c} strokeWidth="2.800" />
  </svg>
);

const UpDown = ({ c = "#a9a9a9" }: { c?: string }) => (
  <svg width="16" height="24" viewBox="0 0 16 24">
    <path d="M3 9L8 3L13 9M3 15L8 21L13 15" fill="none" stroke={c} strokeWidth="2.200" />
  </svg>
);

const Tick = () => (
  <svg width="24" height="24" viewBox="0 0 24 24">
    <path d="M5.500 12.500L10 18L18.500 6.500" fill="none" stroke="#262626" strokeWidth="2.800" strokeLinecap="round" />
  </svg>
);

const Die = () => (
  <svg width="32" height="38" viewBox="0 0 32 38">
    <path d="M1 9L13 1L31 10V29L17 37L1 30Z" fill="#f4f4f4" stroke="#000" strokeWidth="2" />
    <path d="M22 17L30 11V28.500L17.500 36Z" fill="#c4c8c4" />
    <text x="15" y="31" fontFamily="'Liberation Serif', serif" fontWeight="700" fontSize="33" textAnchor="middle" fill="#000">?</text>
  </svg>
);

const Bulb = ({ o }: { o: number }) => (
  <svg width="26" height="30" viewBox="0 0 26 30" opacity={o}>
    <path d="M13 1C19 1 25 4 25 9C25 14 18 16 17.500 22H8.500C8 16 1 14 1 9C1 4 7 1 13 1Z" fill="url(#glow)" />
    <path d="M9 11L11 20M17 11L15 20" stroke="#d87a20" strokeWidth="1.500" />
    <path d="M8.500 22H17.500V26Q16 29 13 29Q10 29 8.500 26Z" fill="#d5dbe8" />
    <path d="M8.500 25H17.500" stroke="#7d8597" />
  </svg>
);

const Padlock = ({ o }: { o: number }) => (
  <svg width="30" height="30" viewBox="0 0 30 30" opacity={o}>
    <path d="M16 13V8Q16 3 21.500 3Q27 3 27 8V12" fill="none" stroke="#cdcdcd" strokeWidth="4" />
    <rect x="1" y="13" width="23" height="16" rx="2" fill="url(#brass)" />
    <path d="M1 28H24" stroke="#e9e4da" strokeWidth="2" />
    <path d="M1.500 14V28" stroke="#ddd0b8" strokeWidth="1.500" />
  </svg>
);

function MenuIcons() {
  return (
    <MenuRight>
      <StatusItem $w={55}>
        <svg width="20" height="34" viewBox="0 0 20 34"><path d="M3 3V31M16 3V31" stroke="#ee4b2b" strokeWidth="5.500" strokeLinecap="round" /></svg>
      </StatusItem>
      <StatusItem $w={66}>
        <svg width="38" height="29" viewBox="0 0 38 29" fill="none" stroke="#fff" strokeWidth="2.500">
          <path d="M25 2A12.300 12.300 0 1 1 25 27H11A9.500 9.500 0 1 1 12 8Q16 2 25 2Z" />
          <path d="M22 22L14 14Q10 10 7 15Q5.500 20 10 21.500Q13 22 15.500 20M15 9L24 19Q28 22.500 31 17Q33 10 26 7.500Q20 7 17 12" strokeWidth="3.400" />
        </svg>
      </StatusItem>
      <StatusItem $w={58}>
        <svg width="22" height="34" viewBox="0 0 22 34"><path d="M2 9L19 24L11 31V3L19 10L2 25" fill="none" stroke="#fff" strokeWidth="2.300" /></svg>
      </StatusItem>
      <StatusItem $w={61}>
        <svg width="38" height="30" viewBox="0 0 38 30"><path d="M8 21H2V2H36V21H30" fill="none" stroke="#fff" strokeWidth="2.500" /><path d="M19 15L30 29H8Z" fill="#fff" /></svg>
      </StatusItem>
      <StatusItem $w={56}>
        <svg width="36" height="28" viewBox="0 0 36 28"><rect width="36" height="28" rx="6" fill="#fff" /><path d="M6 8H3V20H6M11 8V20M16 8V20M21 8V20M26 8V20M31 8V20" fill="none" stroke="#181818" strokeWidth="2.200" /></svg>
      </StatusItem>
      <StatusItem $w={61}>
        <svg width="42" height="30" viewBox="0 0 42 30" fill="none" stroke="#fff" strokeWidth="3.200"><path d="M2 10Q21 -7 40 10M8 16.500Q21 5 34 16.500M14 22.500Q21 16.500 28 22.500" /><circle cx="21" cy="27" r="2.600" fill="#fff" stroke="none" /></svg>
      </StatusItem>
      <StatusItem $w={62}>
        <svg width="28" height="26" viewBox="0 0 28 26"><path d="M1 8H7L15 1V25L7 18H1Z" fill="#fff" /><path d="M20 7Q25 13 20 19" fill="none" stroke="#fff" strokeWidth="2.400" /></svg>
      </StatusItem>
      <StatusItem $w={60} $size={23.5} $ls={-0.5}>85%</StatusItem>
      <StatusItem $w={78}>
        <svg width="48" height="26" viewBox="0 0 48 26"><path d="M15 2H5Q2 2 2 5V21Q2 24 5 24H15M28 2H37Q40 2 40 5V21Q40 24 37 24H26" fill="none" stroke="#fff" strokeWidth="2.400" /><path d="M24 0L12 15H20L17 26L30 10H22Z" fill="#fff" /><path d="M43 9Q47 13 43 17Z" fill="#fff" /></svg>
      </StatusItem>
      <StatusItem $w={89}>7 Mar</StatusItem>
      <StatusItem $w={102}>09:05</StatusItem>
      <StatusItem $w={215} $ls={-0.1}>Tom Van Mele</StatusItem>
      <StatusItem $w={63}>
        <svg width="30" height="30" viewBox="0 0 30 30"><circle cx="12" cy="12" r="9.500" fill="none" stroke="#fff" strokeWidth="2.600" /><path d="M19 19L28 28" stroke="#fff" strokeWidth="3.200" /></svg>
      </StatusItem>
      <StatusItem $w={57}>
        <svg width="33" height="33" viewBox="0 0 33 33"><circle cx="16.500" cy="16.500" r="15.300" fill="url(#siri)" stroke="#bcbcc8" strokeWidth="2" /><path d="M6 21Q14 18 15 9Q18 15 26 14Q19 18 18.500 27Q17 21 10 24Q14 20 6 21Z" fill="#dff4ff" fillOpacity="0.85" /></svg>
      </StatusItem>
      <StatusItem $w={40}>
        <svg width="37" height="22" viewBox="0 0 37 22"><path d="M0 2H4M8 2H37M0 11H4M8 11H31M0 20H4M8 20H37" stroke="#fff" strokeWidth="4" /></svg>
      </StatusItem>
    </MenuRight>
  );
}

/* ---------- data ---------- */

const MENUS: [string, number][] = [
  ["File", 81], ["Edit", 87], ["View", 99], ["Curve", 114], ["Surface", 138], ["Solid", 102],
  ["Mesh", 107], ["Dimension", 173], ["Transform", 168], ["Tools", 105], ["Analyze", 139],
  ["Render", 129], ["Window", 140], ["Help", 80],
];

const MODES: [string, number][] = [
  ["Grid Snap", 183], ["Ortho", 133], ["Planar", 138], ["SmartTrack", 202], ["Gumball", 161], ["History", 120],
];

const SNAPS: [string, boolean][] = [
  ["End", true], ["Near", false], ["Point", true], ["Midpoint", false], ["Center", true],
  ["Intersection", false], ["Perpendicular", true], ["Tangent", false], ["Quadrant", false], ["Knot", false],
];

const CAMERA: [string, string][] = [
  ["Lens length:", "50"], ["Rotation:", "0"], ["X location:", "12.84"], ["Y location:", "-15.52"], ["Z location:", "4.63"],
];

const LAYERS: [string, string][] = [
  ["Default", "#000"], ["Layer 01", "#c8331d"], ["Layer 02", "#884acd"], ["Layer 03", "#0d35f7"],
  ["Layer 04", "#368a26"], ["Layer 05", "#fff"], ["Arch", "#000"],
];

export default function App() {
  return (
    <Desktop>
      <Global />
      <Paints />
      <MenuBar>
        <MenuLeft>
          <AppleSlot>
            <svg width="30" height="34" viewBox="0 0 30 34" fill="#fff">
              <path d="M20.500 0C20.800 3.500 17.500 7.500 14 7.500C13.700 4 17 .5 20.500 0ZM27 11.500C24.500 13 23 15.200 23 18C23 21.200 25 23.800 28 25C27 28.500 23.500 33.500 20.500 33.500C18.800 33.500 17.600 32.300 15.300 32.300C13 32.300 11.700 33.500 10 33.500C6.500 33.500 1.500 26.500 1.500 19.500C1.500 13 5.500 9.200 9.700 9.200C12.200 9.200 13.900 10.600 15.500 10.600C17 10.600 19 9.100 21.500 9.100C23.500 9.100 25.700 9.800 27 11.500Z" />
            </svg>
          </AppleSlot>
          <MenuEntry $w={193} $bold>Rhinoceros</MenuEntry>
          {MENUS.map(([t, w]) => (
            <MenuEntry key={t} $w={w}>{t}</MenuEntry>
          ))}
        </MenuLeft>
        <MenuIcons />
      </MenuBar>

      <Window>
        <TitleBar>
          <TitleRow>
            <Lights><Light $dot /><Light /><Light /></Lights>
            <WindowTitle>Untitled <em>— Edited</em></WindowTitle>
          </TitleRow>
          <ModeRow>
            <SideToggle />
            <Modes>
              {MODES.map(([t, w]) => (
                <Mode key={t} $w={w}>{t}</Mode>
              ))}
            </Modes>
            <RoundIcons>
              <svg width="42" height="42" viewBox="0 0 42 42" fill="none" stroke="#a8a8a8" strokeWidth="2"><path d="M34 14A16 16 0 1 0 34 28" stroke="#858585" /><circle cx="20" cy="21" r="3.500" fill="#a8a8a8" /><path d="M20 21H40" /></svg>
              <svg width="42" height="42" viewBox="0 0 42 42" fill="none" stroke="#a8a8a8" strokeWidth="2.400"><circle cx="21" cy="21" r="19" /><circle cx="21" cy="21" r="11" /></svg>
            </RoundIcons>
            <DisplayMode><i /><span>Default</span></DisplayMode>
            <SideToggle $right />
          </ModeRow>
        </TitleBar>
        <ScriptBar>
          {[0, 1, 2, 3, 4].map((i) => <Die key={i} />)}
        </ScriptBar>

        <Work>
          <LeftColumn>
            <LeftHeader />
            <CommandField>Command</CommandField>
            <Tools />
            <SnapPanel>
              <SnapList>
                <Line><RadioDot $on />Persistent</Line>
                <Line><RadioDot />One shot</Line>
                <SnapGroup>
                  {SNAPS.map(([t, on]) => (
                    <Line key={t} $pl={2} $gap={10}><CheckBox $on={on}>{on && <Tick />}</CheckBox>{t}</Line>
                  ))}
                </SnapGroup>
              </SnapList>
              <Track $w={30} $top={6}><Thumb $h={231} /></Track>
            </SnapPanel>
          </LeftColumn>

          <ViewColumn>
            <ViewTabs>
              <svg width="30" height="28" viewBox="0 0 30 28" fill="none" stroke="#b0b0b0" strokeWidth="2"><path d="M1 1H29V27H1ZM15 1V27M1 14H29M1 4H10M15 17H24M15 4H22M1 17H8" /></svg>
              <LayoutIcon width="30" height="28" viewBox="0 0 30 28" fill="none" stroke="#4aa5c8" strokeWidth="2"><path d="M1 1H29V27H1ZM1 3H8" /></LayoutIcon>
              <Sep $mr={38} />
              <ViewTab $w={183} $active>Perspective</ViewTab>
              <Sep $mr={37} />
              <ViewTab $w={86}>Top</ViewTab>
              <Sep $mr={38} />
              <ViewTab $w={104}>Front</ViewTab>
              <Sep $mr={39} />
              <ViewTab $w={80}>Right</ViewTab>
              <Layouts>Layouts...</Layouts>
            </ViewTabs>
            <ViewCanvas>
              <Scene />
              <ViewName>Perspective</ViewName>
            </ViewCanvas>
          </ViewColumn>

          <RightColumn>
            <PanelHead $h={118}>
              <PanelTitle $h={48}>
                <b />
                <span>Properties: Viewport</span>
                <GearButton><Cog s={23} c="#ddd" hole="#323232" /><Chevron /></GearButton>
              </PanelTitle>
              <IconStrip $pl={241} $h={60} $gap={14}>
                <svg width="46" height="34" viewBox="0 0 46 34" fill="none" stroke="#868686" strokeWidth="2"><path d="M1 8H11L14 2H31L34 8H45V33H1Z" /><circle cx="23" cy="21" r="12" /><circle cx="23" cy="21" r="8.500" /></svg>
                <svg width="46" height="42" viewBox="0 0 46 42" fill="none"><rect x="1.500" y="1.500" width="43" height="39" stroke="#a5a5a5" strokeWidth="3" /><rect x="6" y="6" width="34" height="30" stroke="#5c5c5c" strokeWidth="2" /><rect x="10" y="10" width="26" height="20" stroke="#777" strokeWidth="2" /></svg>
                <svg width="46" height="44" viewBox="0 0 46 44" fill="#323232" stroke="#8c8c8c" strokeWidth="2"><circle cx="35" cy="9" r="7.500" /><circle cx="25" cy="19" r="8.500" /><circle cx="13" cy="31" r="11.500" strokeWidth="2.500" /></svg>
              </IconStrip>
            </PanelHead>
            <Properties>
              <PropBody>
                <PropRow $label={107} $mb={13}><label>Title:</label><Field $w={463}>Perspective</Field></PropRow>
                <PropRow $label={107} $mb={0}><label>Size:</label><span>2340 x 1770</span></PropRow>
                <Rule $mt={20} />
                <SectionName $mt={16} $mb={3}>Projection</SectionName>
                <Line $pl={60} $gap={8}><RadioDot />Parallel</Line>
                <Line $pl={60} $gap={8}><RadioDot $on />Perspective</Line>
                <Line $pl={60} $gap={8}><RadioDot />Two point perspective</Line>
                <Rule $mt={27} />
                <SectionName $mt={16} $mb={15}>Wallpaper</SectionName>
                <Choose><span>Choose...</span><UpDown /></Choose>
                <Line $h={40} $mt={7} $pl={56} $gap={10} $dim><CheckBox $dim />Show wallpaper</Line>
                <Line $h={40} $pl={56} $gap={10} $dim><CheckBox $dim />Show wallpaper as gray scale</Line>
                <Rule $mt={28} />
                <SectionName $mt={16} $mb={17}>Camera</SectionName>
                {CAMERA.map(([k, v]) => (
                  <PropRow key={k} $label={183}><label>{k}</label><Field $w={118}>{v}</Field></PropRow>
                ))}
              </PropBody>
              <Track $w={28} $top={6}><Thumb $h={586} /></Track>
            </Properties>
            <LayersPanel>
              <PanelHead $h={117}>
                <PanelTitle $h={46}>
                  <b />
                  <span>Panels: Layers</span>
                  <GearButton><Cog s={23} c="#ddd" hole="#323232" /><Chevron /></GearButton>
                </PanelTitle>
                <IconStrip $pl={121} $h={62} $gap={0}>
                  <svg width="410" height="44" viewBox="0 0 410 44" fill="none" stroke="#9a9a9a" strokeWidth="2">
                    <path d="M1 17L23 4L45 17L23 31ZM8 22L1 26L23 39L45 26L38 22" />
                    <path d="M71 3H88L96 11V37H71ZM88 3V11H96" />
                    <path d="M124 16L142 4L160 12V33L147 41L124 33ZM124 16L146 21V40M146 21L160 12" />
                    <path d="M192 35V12Q192 5 198 5H224Q227 6 226 13H220V9Q219 5 217 6V34Q216 41 208 41H187Q181 37 187 34H208Q213 35 210 38Q207 39 207 36" />
                    <rect x="243" y="3" width="41" height="31" rx="2" /><rect x="247" y="7" width="33" height="20" /><path d="M259 35L257 39H270L268 35M251 40H276" />
                    <circle cx="323" cy="22" r="19" />
                    <path d="M315 16Q315 9 323 9Q331 9 331 16Q331 20 326 23Q323 25 323 30" strokeWidth="3" /><circle cx="323" cy="35" r="1.600" fill="#9a9a9a" />
                    <rect x="361" y="3" width="44" height="37" strokeWidth="2.400" />
                    <path d="M368 3V40M374 3V40M388 3V40M394 3V40M400 3V40M361 10H405M361 16H405M361 28H405M361 34H405" strokeWidth="1.300" stroke="#6c6c6c" />
                    <path d="M381 3V22H405M362 6H371" strokeWidth="2.400" />
                  </svg>
                </IconStrip>
              </PanelHead>
              <LayerGridHead><span>Name</span><i /><i /><i /><i /></LayerGridHead>
              <LayerList>
                {LAYERS.map(([name, c], i) => (
                  <LayerRow key={name}>
                    {name === "Arch" ? (
                      <svg width="14" height="18" viewBox="0 0 14 18"><path d="M0 0L14 9L0 18Z" fill="#a0a0a0" /></svg>
                    ) : (
                      <b />
                    )}
                    <span>{name}</span>
                    <RadioDot $on={i === 0} $dark />
                    <Bulb o={i === 0 ? 0.5 : 1} />
                    <Padlock o={i === 0 ? 0.5 : 1} />
                    <Swatch $c={c} />
                  </LayerRow>
                ))}
              </LayerList>
              <LayerButtons>
                <ButtonPill $w={92}>
                  <svg width="92" height="30" viewBox="0 0 92 30"><path d="M25 4V26M14 15H36" stroke="#f2f2f2" strokeWidth="2" /><path d="M47.500 0V31" stroke="#585858" strokeWidth="1.500" /><path d="M57 15H78" stroke="#8c8c8c" strokeWidth="2" /></svg>
                </ButtonPill>
                <ButtonPill $w={68}>
                  <IconStrip $pl={10} $h={30} $gap={14}><Cog s={23} c="#2c2c2c" hole="#666" /><Chevron c="#eee" /></IconStrip>
                </ButtonPill>
              </LayerButtons>
            </LayersPanel>
          </RightColumn>
        </Work>

        <StatusBar>
          <svg width="28" height="22" viewBox="0 0 28 22"><path d="M0 1H28M0 7.500H28M0 14H28M0 20.500H28" stroke="#b8b8b8" strokeWidth="1.800" /></svg>
          <StatusText $w={2339} $ml={5}>Command: RunPythonScript</StatusText>
          <StatusText $w={104}>Meters</StatusText>
          <CPlane>CPlane<UpDown c="#e0e0e0" /></CPlane>
          <StatusText $w={164}>X: 0.451</StatusText>
          <StatusText $w={170}>Y: 4.938</StatusText>
          <StatusText $w={120}>Z: 0.000</StatusText>
        </StatusBar>
      </Window>
    </Desktop>
  );
}
